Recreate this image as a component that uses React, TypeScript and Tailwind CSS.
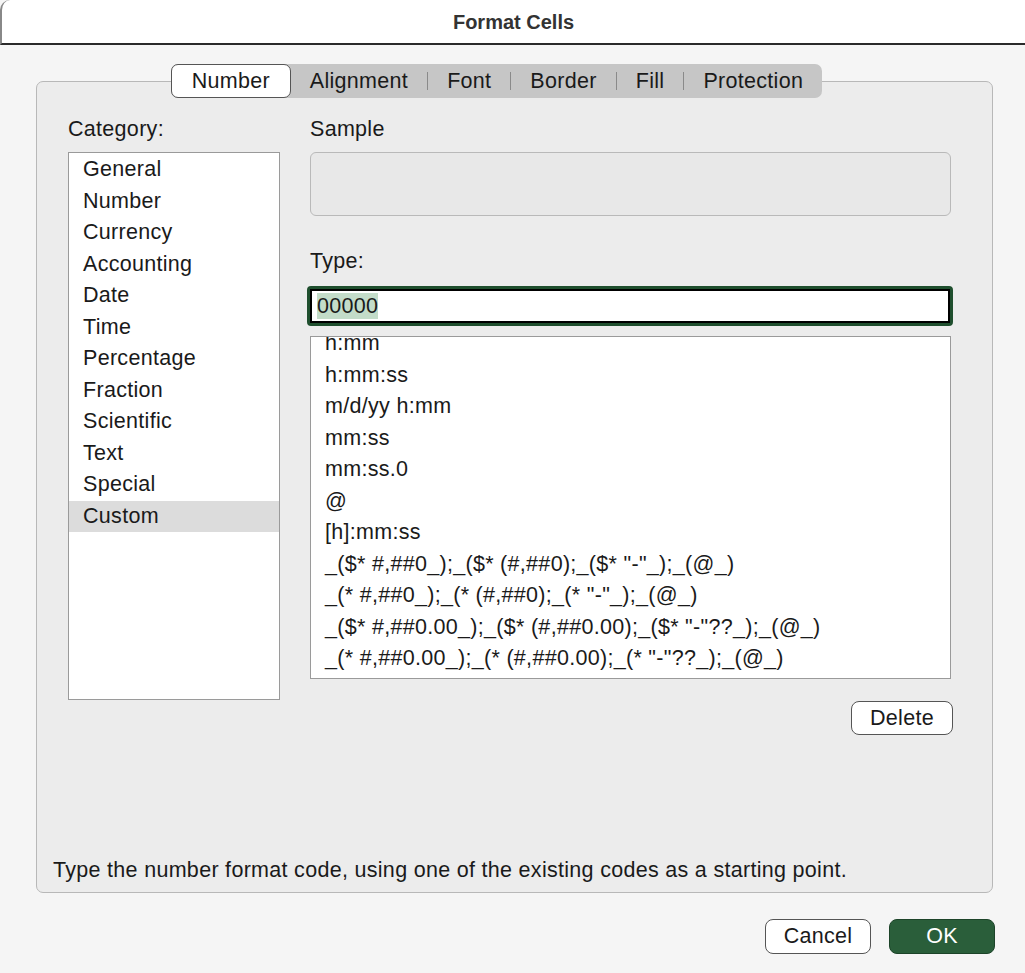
const categories = ['General', 'Number', 'Currency', 'Accounting', 'Date', 'Time', 'Percentage', 'Fraction', 'Scientific', 'Text', 'Special', 'Custom']
const types = [
  'h:mm',
  'h:mm:ss',
  'm/d/yy h:mm',
  'mm:ss',
  'mm:ss.0',
  '@',
  '[h]:mm:ss',
  '_($* #,##0_);_($* (#,##0);_($* "-"_);_(@_)',
  '_(* #,##0_);_(* (#,##0);_(* "-"_);_(@_)',
  '_($* #,##0.00_);_($* (#,##0.00);_($* "-"??_);_(@_)',
  '_(* #,##0.00_);_(* (#,##0.00);_(* "-"??_);_(@_)',
]
const tabs = ['Alignment', 'Font', 'Border', 'Fill', 'Protection']

export default function App() {
  return (
    <div className="w-[1025px] h-[973px] bg-[#f5f5f5] text-[21.5px] tracking-[0.3px] text-[#1a1a1a] overflow-hidden" style={{ fontFamily: '"Liberation Sans", Arial, sans-serif' }}>
      <div className="h-[45px] bg-white border-b-2 border-[#2a2a2a] border-l-2 border-l-[#888] rounded-tl-[10px] flex items-center justify-center font-bold text-[20px] tracking-normal text-[#333]">
        Format Cells
      </div>
      <div className="px-[36px] pt-[19px]">
        <div className="relative">
          <div className="flex justify-center pr-[32px] relative z-10">
            <div className="flex items-center h-[34px] bg-[#c6c6c6] rounded-[7px]">
              <div className="h-[34px] w-[120px] bg-white border border-[#555] rounded-[7px] flex items-center justify-center">Number</div>
              {tabs.map((t, i) => (
                <div key={t} className="flex items-center">
                  {i > 0 && <div className="w-px h-[18px] bg-[#8a8a8a]" />}
                  <div className="px-[19px]">{t}</div>
                </div>
              ))}
            </div>
          </div>
          <div className="-mt-[17px] w-[957px] h-[812px] bg-[#ececec] border border-[#b8b8b8] rounded-[7px] px-[31px] pt-[34px] flex flex-col">
            <div className="flex gap-[30px]">
              <div className="w-[212px]">
                <div className="h-[26px] leading-[26px]">Category:</div>
                <div className="mt-[10px] h-[548px] bg-white border border-[#9a9a9a] pt-[1px]">
                  {categories.map((c) => (
                    <div key={c} className={`h-[31.5px] leading-[31.5px] pl-[14px] ${c === 'Custom' ? 'bg-[#dcdcdc]' : ''}`}>{c}</div>
                  ))}
                </div>
              </div>
              <div className="flex-1 pr-[10px]">
                <div className="h-[26px] leading-[26px]">Sample</div>
                <div className="mt-[10px] h-[64px] bg-[#e8e8e8] border border-[#b9b9b9] rounded-[6px]" />
                <div className="mt-[32px] h-[26px] leading-[26px]">Type:</div>
                <div className="mt-[12px] -ml-[3px] -mr-[2px] h-[40px] border-[3px] border-[#1f4f2e] rounded-[4px]">
                  <div className="h-full bg-white border-2 border-black flex items-center pl-[5px]">
                    <span className="bg-[#c3dcc9] leading-[26px]">00000</span>
                  </div>
                </div>
                <div className="mt-[10px] h-[343px] bg-white border border-[#9a9a9a] overflow-hidden">
                  <div className="-mt-[9px]">
                    {types.map((t) => (
                      <div key={t} className="h-[31.5px] leading-[31.5px] pl-[14px] whitespace-nowrap">{t}</div>
                    ))}
                  </div>
                </div>
                <div className="flex justify-end mt-[22px] -mr-[2px]">
                  <div className="w-[102px] h-[34px] bg-white border border-[#555] rounded-[8px] flex items-center justify-center">Delete</div>
                </div>
              </div>
            </div>
            <div className="mt-auto mb-[6px] -ml-[15px] whitespace-nowrap">Type the number format code, using one of the existing codes as a starting point.</div>
          </div>
        </div>
        <div className="flex justify-end gap-[18px] mt-[26px] w-[959px]">
          <div className="w-[106px] h-[35px] bg-white border border-[#555] rounded-[8px] flex items-center justify-center">Cancel</div>
          <div className="w-[106px] h-[35px] bg-[#2a5e3a] border border-[#1d4429] text-white rounded-[8px] flex items-center justify-center">OK</div>
        </div>
      </div>
    </div>
  )
}
